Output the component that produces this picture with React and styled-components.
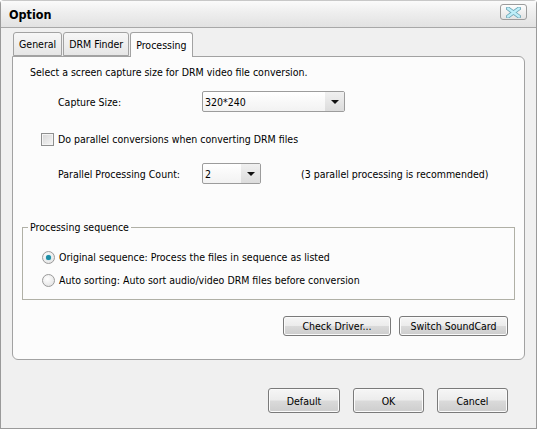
import React from 'react';
import styled, { createGlobalStyle } from 'styled-components';

const Global = createGlobalStyle`
  html, body { margin: 0; padding: 0; background: #ffffff; }
  body { font-family: "DejaVu Sans Condensed", "DejaVu Sans", sans-serif; font-size: 10.5px; color: #000; }
  * { box-sizing: border-box; }
`;

const Window = styled.div`
  width: 537px;
  height: 429px;
  background: #f0f0f0;
  border: 1px solid #9a9a9a;
  border-top: 1px solid #c8c8c8;
  border-radius: 4px 4px 0 0;
  display: flex;
  flex-direction: column;
`;

const TitleBar = styled.div`
  height: 27px;
  flex: none;
  display: flex;
  align-items: center;
  justify-content: space-between;
  padding: 0 9px 0 8px;
  background: linear-gradient(#fbfbfb 0%, #eeeeee 45%, #e2e2e2 100%);
  border-bottom: 1px solid #a8a8a8;
`;

const Title = styled.div`
  font-weight: bold;
  font-size: 12.5px;
`;

const CloseBtn = styled.div`
  width: 27px;
  height: 16px;
  margin-top: -4px;
  border: 1px solid #9c9c9c;
  border-radius: 3px;
  background: linear-gradient(#fdfdfd, #e4e4e4);
  display: flex;
  align-items: center;
  justify-content: center;
`;

const Body = styled.div`
  flex: 1;
  display: flex;
  flex-direction: column;
  padding: 4px 11px 0 11px;
`;

const TabRow = styled.div`
  display: flex;
  height: 24px;
  align-items: flex-end;
  padding-left: 1px;
  position: relative;
  z-index: 1;
`;

const Tab = styled.div`
  height: ${p => (p.$active ? '25px' : '24px')};
  margin-bottom: ${p => (p.$active ? '-1px' : '0')};
  padding: 0 ${p => p.$pad}px;
  display: flex;
  align-items: center;
  border: 1px solid #a2a2a2;
  border-bottom: ${p => (p.$active ? 'none' : '1px solid #a2a2a2')};
  border-radius: 3px 3px 0 0;
  margin-right: 1px;
  background: ${p => (p.$active ? '#fcfcfc' : 'linear-gradient(#f7f7f7, #e6e6e6)')};
  padding-bottom: ${p => (p.$active ? '1px' : '0')};
`;

const Panel = styled.div`
  height: 304px;
  background: #fcfcfc;
  border: 1px solid #a2a2a2;
  border-radius: 0 6px 6px 6px;
  padding: 8px 16px 0 17px;
  display: flex;
  flex-direction: column;
`;

const Line = styled.div`
  height: 14px;
  line-height: 14px;
  white-space: nowrap;
`;

const FieldRow = styled.div`
  display: flex;
  align-items: center;
  height: 21px;
  margin-top: ${p => p.$mt}px;
  padding-left: 28px;
`;

const Label = styled.div`
  width: 144px;
  white-space: nowrap;
`;

const Combo = styled.div`
  width: ${p => p.$w}px;
  height: 21px;
  border: 1px solid #9c9c9c;
  border-radius: 2px;
  display: flex;
  background: linear-gradient(#ffffff, #f2f2f2);
`;

const ComboValue = styled.div`
  flex: 1;
  padding-left: 2px;
  display: flex;
  align-items: center;
`;

const ComboArrow = styled.div`
  width: 19px;
  display: flex;
  align-items: center;
  justify-content: center;
  background: linear-gradient(#f0f0f0, #dcdcdc);
  &::after {
    content: '';
    border-left: 4px solid transparent;
    border-right: 4px solid transparent;
    border-top: 4px solid #111;
  }
`;

const Hint = styled.div`
  margin-left: 40px;
  white-space: nowrap;
`;

const CheckRow = styled.div`
  display: flex;
  align-items: center;
  height: 14px;
  margin-top: 20px;
  padding-left: 11px;
  gap: 4px;
`;

const CheckBox = styled.div`
  width: 13px;
  height: 13px;
  border: 1px solid #8e8f8f;
  background: linear-gradient(135deg, #d6d6d6, #f6f6f6);
  box-shadow: inset 0 0 0 1px #f4f4f4;
`;

const Group = styled.fieldset`
  margin: 36px -7px 0 -8px;
  padding: 0 0 12px 0;
  border: 1px solid #b0b0a6;
  border-radius: 0;
  min-width: 0;
`;

const Legend = styled.legend`
  margin-left: 5px;
  padding: 0 2px;
  line-height: 14px;
`;

const RadioRow = styled.div`
  display: flex;
  align-items: center;
  height: 14px;
  margin-top: ${p => p.$mt}px;
  padding-left: 19px;
  gap: 4px;
`;

const Radio = styled.div`
  width: 13px;
  height: 13px;
  border-radius: 50%;
  border: 1px solid #9a9a9a;
  background: radial-gradient(circle at 40% 35%, #ffffff, #dedede);
  display: flex;
  align-items: center;
  justify-content: center;
  &::after {
    content: '';
    width: 5px;
    height: 5px;
    border-radius: 50%;
    background: ${p => (p.$checked ? '#1e8ea6' : 'transparent')};
    box-shadow: ${p => (p.$checked ? '0 0 1px #2fa9c4' : 'none')};
  }
`;

const ButtonRow = styled.div`
  display: flex;
  justify-content: flex-end;
  gap: ${p => p.$gap}px;
  margin-top: ${p => p.$mt}px;
  padding-right: ${p => p.$pr}px;
`;

const Button = styled.div`
  width: ${p => p.$w}px;
  height: ${p => p.$h}px;
  border: 1px solid #7a7a7a;
  border-radius: 3px;
  display: flex;
  align-items: center;
  justify-content: center;
  white-space: nowrap;
  background: linear-gradient(#f6f6f6 0%, #ececec 48%, #dadada 52%, #cdcdcd 100%);
  box-shadow: inset 0 0 0 1px #fbfbfb;
`;

const CloseIcon = () => (
  <svg width="15" height="11" viewBox="0 0 15 11">
    <path d="M2 1.5 L13 9.5 M13 1.5 L2 9.5" stroke="#6aa3b4" strokeWidth="4" strokeLinecap="round" />
    <path d="M2 1.5 L13 9.5 M13 1.5 L2 9.5" stroke="#bdeef8" strokeWidth="2.4" strokeLinecap="round" />
  </svg>
);

export default function App() {
  return (
    <>
      <Global />
      <Window>
        <TitleBar>
          <Title>Option</Title>
          <CloseBtn><CloseIcon /></CloseBtn>
        </TitleBar>
        <Body>
          <TabRow>
            <Tab $pad={5}>General</Tab>
            <Tab $pad={5}>DRM Finder</Tab>
            <Tab $pad={5} $active>Processing</Tab>
          </TabRow>
          <Panel>
            <Line>Select a screen capture size for DRM video file conversion.</Line>
            <FieldRow $mt={12}>
              <Label>Capture Size:</Label>
              <Combo $w={143}>
                <ComboValue>320*240</ComboValue>
                <ComboArrow />
              </Combo>
            </FieldRow>
            <CheckRow>
              <CheckBox />
              <span>Do parallel conversions when converting DRM files</span>
            </CheckRow>
            <FieldRow $mt={17}>
              <Label>Parallel Processing Count:</Label>
              <Combo $w={59}>
                <ComboValue>2</ComboValue>
                <ComboArrow />
              </Combo>
              <Hint>(3 parallel processing is recommended)</Hint>
            </FieldRow>
            <Group>
              <Legend>Processing sequence</Legend>
              <RadioRow $mt={16}>
                <Radio $checked />
                <span>Original sequence: Process the files in sequence as listed</span>
              </RadioRow>
              <RadioRow $mt={9}>
                <Radio />
                <span>Auto sorting: Auto sort audio/video DRM files before conversion</span>
              </RadioRow>
            </Group>
            <ButtonRow $gap={8} $mt={16} $pr={0}>
              <Button $w={108} $h={20}>Check Driver...</Button>
              <Button $w={109} $h={20}>Switch SoundCard</Button>
            </ButtonRow>
          </Panel>
          <ButtonRow $gap={13} $mt={28} $pr={17}>
            <Button $w={72} $h={25}>Default</Button>
            <Button $w={71} $h={25}>OK</Button>
            <Button $w={71} $h={25}>Cancel</Button>
          </ButtonRow>
        </Body>
      </Window>
    </>
  );
}
